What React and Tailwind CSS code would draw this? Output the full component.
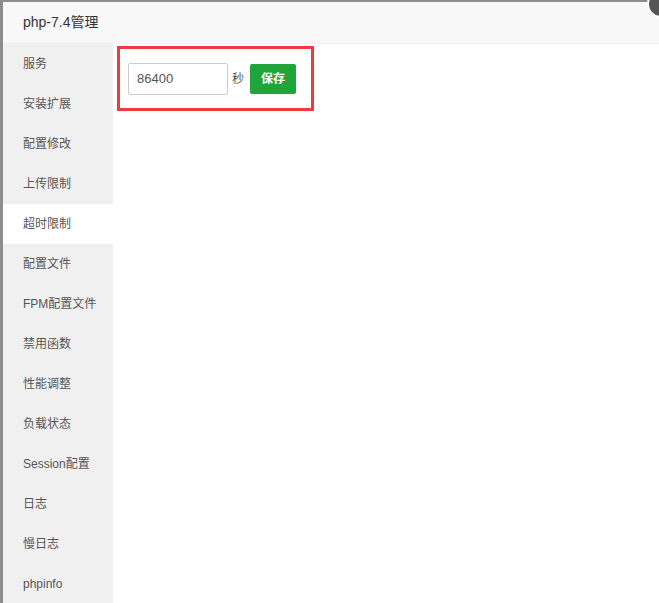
import React from 'react'

const menu = ['服务', '安装扩展', '配置修改', '上传限制', '超时限制', '配置文件', 'FPM配置文件', '禁用函数', '性能调整', '负载状态', 'Session配置', '日志', '慢日志', 'phpinfo']

const App = () => {
  return (
    <div className="h-[603px] w-[659px] overflow-hidden bg-[#8d8d8d] pl-[3px] pt-[2px] relative" style={{ fontFamily: '"Liberation Sans", "Noto Sans CJK SC", sans-serif' }}>
      <div className="h-full w-full bg-white flex flex-col">
        {/* header */}
        <div className="h-[42px] shrink-0 bg-[#f8f8f8] border-b border-[#eee] flex items-center pl-5 text-[14px] text-[#333]">
          php-7.4管理
        </div>

        <div className="flex flex-1">
          {/* sidebar */}
          <div className="w-[110px] bg-[#f0f0f0] flex flex-col">
            {menu.map((m) => (
              <div
                key={m}
                className={`h-10 shrink-0 flex items-center pl-5 text-[12px] text-[#555] ${m === '超时限制' ? 'bg-white' : ''}`}
              >
                {m}
              </div>
            ))}
          </div>

          {/* content */}
          <div className="flex-1 pl-[4px] pt-[2px]">
            <div className="w-[197px] h-[65px] border-[3px] border-[#f23a3a] flex items-center pl-[8px] gap-1">
              <input
                defaultValue="86400"
                className="w-[100px] h-8 border border-[#ccc] rounded-[2px] px-2 text-[13px] text-[#555] outline-none"
              />
              <span className="text-[12px] text-[#555]">秒</span>
              <button className="ml-[2px] w-[46px] h-[30px] bg-[#20a53a] rounded-[2px] text-white text-[12px] font-bold">
                保存
              </button>
            </div>
          </div>
        </div>
      </div>

      {/* close button */}
      <div className="absolute -top-[10px] -right-[16px] w-[28px] h-[28px] rounded-full bg-[#555] border-2 border-white"></div>
    </div>
  )
}

export default App
